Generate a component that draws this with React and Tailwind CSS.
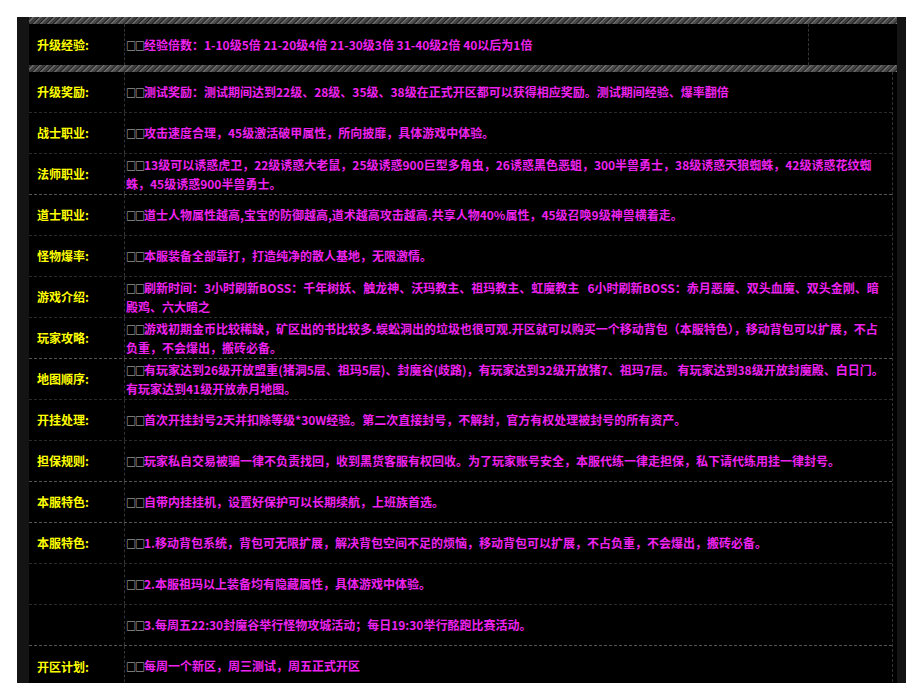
const rows = [
  ["升级奖励:", "测试奖励：测试期间达到22级、28级、35级、38级在正式开区都可以获得相应奖励。测试期间经验、爆率翻倍"],
  ["战士职业:", "攻击速度合理，45级激活破甲属性，所向披靡，具体游戏中体验。"],
  ["法师职业:", "13级可以诱惑虎卫，22级诱惑大老鼠，25级诱惑900巨型多角虫，26诱惑黑色恶蛆，300半兽勇士，38级诱惑天狼蜘蛛，42级诱惑花纹蜘蛛，45级诱惑900半兽勇士。", true],
  ["道士职业:", "道士人物属性越高,宝宝的防御越高,道术越高攻击越高.共享人物40%属性，45级召唤9级神兽横着走。"],
  ["怪物爆率:", "本服装备全部靠打，打造纯净的散人基地，无限激情。"],
  ["游戏介绍:", "刷新时间：3小时刷新BOSS：千年树妖、触龙神、沃玛教主、祖玛教主、虹魔教主\u00a0\u00a0\u00a06小时刷新BOSS：赤月恶魔、双头血魔、双头金刚、暗殿鸡、六大暗之"],
  ["玩家攻略:", "游戏初期金币比较稀缺，矿区出的书比较多.蜈蚣洞出的垃圾也很可观.开区就可以购买一个移动背包（本服特色），移动背包可以扩展，不占负重，不会爆出，搬砖必备。", true],
  ["地图顺序:", "有玩家达到26级开放盟重(猪洞5层、祖玛5层)、封魔谷(歧路)，有玩家达到32级开放猪7、祖玛7层。 有玩家达到38级开放封魔殿、白日门。有玩家达到41级开放赤月地图。"],
  ["开挂处理:", "首次开挂封号2天并扣除等级*30W经验。第二次直接封号，不解封，官方有权处理被封号的所有资产。"],
  ["担保规则:", "玩家私自交易被骗一律不负责找回，收到黑货客服有权回收。为了玩家账号安全，本服代练一律走担保，私下请代练用挂一律封号。", true],
  ["本服特色:", "自带内挂挂机，设置好保护可以长期续航，上班族首选。", true],
  ["本服特色:", "1.移动背包系统，背包可无限扩展，解决背包空间不足的烦恼，移动背包可以扩展，不占负重，不会爆出，搬砖必备。"],
  ["", "2.本服祖玛以上装备均有隐藏属性，具体游戏中体验。"],
  ["", "3.每周五22:30封魔谷举行怪物攻城活动；每日19:30举行酩跑比赛活动。", true],
  ["开区计划:", "每周一个新区，周三测试，周五正式开区"],
];

function Tofu() {
  return <span className="text-[#ccc] text-[10px] tracking-[-1px]">□□</span>;
}

function Cell({ label, text, strong, last }) {
  return (
    <div className={`flex h-[41px] ${last ? "" : strong ? "border-b border-dashed border-[#555]" : "border-b border-dashed border-[#2a2a2a]"}`}>
      <div className="w-[96px] shrink-0 flex items-center pl-[8px] text-[#ffff00] border-r border-dashed border-[#333]">{label}</div>
      <div className="flex-1 flex items-center pl-[1px] pr-2 leading-[18px] text-[#ee22ee]">
        <span><Tofu />{text}</span>
      </div>
    </div>
  );
}

const tex = "h-[7px] bg-[repeating-linear-gradient(135deg,#555_0px,#222_2px,#777_3px,#333_5px)]";

export default function App() {
  return (
    <div className="min-h-screen bg-white pt-[17px] pl-[17px]" style={{ fontFamily: '"Noto Sans CJK SC", "Liberation Sans", sans-serif' }}>
      <div className="w-[889px] h-[666px] bg-black border-l-[12px] border-r-[9px] border-[#141414] text-[12px] font-bold overflow-hidden">
        <div className={tex} />
        <div className="flex h-[41px]">
          <div className="w-[96px] shrink-0 flex items-center pl-[8px] text-[#ffff00] border-r border-dashed border-[#333]">升级经验:</div>
          <div className="w-[684px] flex items-center pl-[1px] text-[#ee22ee] border-r border-dashed border-[#333]">
            <span><Tofu />经验倍数：1-10级5倍 21-20级4倍 21-30级3倍 31-40级2倍 40以后为1倍</span>
          </div>
          <div className="flex-1" />
        </div>
        <div className={tex} />
        <div className="border-r border-dashed border-[#333] mr-[4px]">
          {rows.map(([l, t, s], i) => (
            <Cell key={i} label={l} text={t} strong={s} last={i === rows.length - 1} />
          ))}
        </div>
      </div>
    </div>
  );
}
